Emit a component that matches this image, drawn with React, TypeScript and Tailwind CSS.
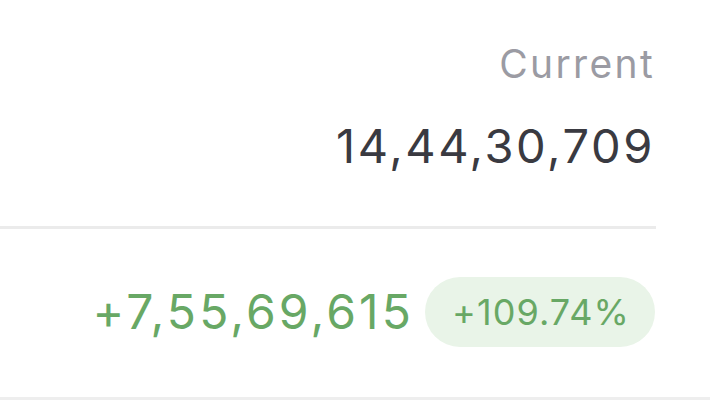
export default function App() {
  return (
    <div
      className="w-[710px] h-[400px] bg-white overflow-hidden flex flex-col"
      style={{ fontFamily: 'Inter, "Noto Sans", sans-serif' }}
    >
      <div className="flex flex-col items-end pr-[55px] pt-[40px] h-[226px]">
        <span className="text-[39px] leading-[48px] tracking-[0.06em] text-[#9b9ba3]">Current</span>
        <span className="mt-[30px] text-[47px] leading-[56px] tracking-[0.055em] text-[#3a3a41]">
          14,44,30,709
        </span>
      </div>
      <div className="h-[3px] w-[656px] bg-[#ebebeb]" />
      <div className="flex items-center justify-end gap-[11px] pr-[55px] pt-[48px]">
        <span className="text-[48px] leading-[56px] tracking-[0.065em] text-[#68a865]">
          +7,55,69,615
        </span>
        <span className="h-[70px] pl-[27px] pr-[25px] flex items-center rounded-full bg-[#e9f4e8] text-[36px] tracking-[0.03em] text-[#68a865]">
          +109.74%
        </span>
      </div>
      <div className="mt-auto h-[3px] bg-[#eeeeee]" />
    </div>
  );
}
